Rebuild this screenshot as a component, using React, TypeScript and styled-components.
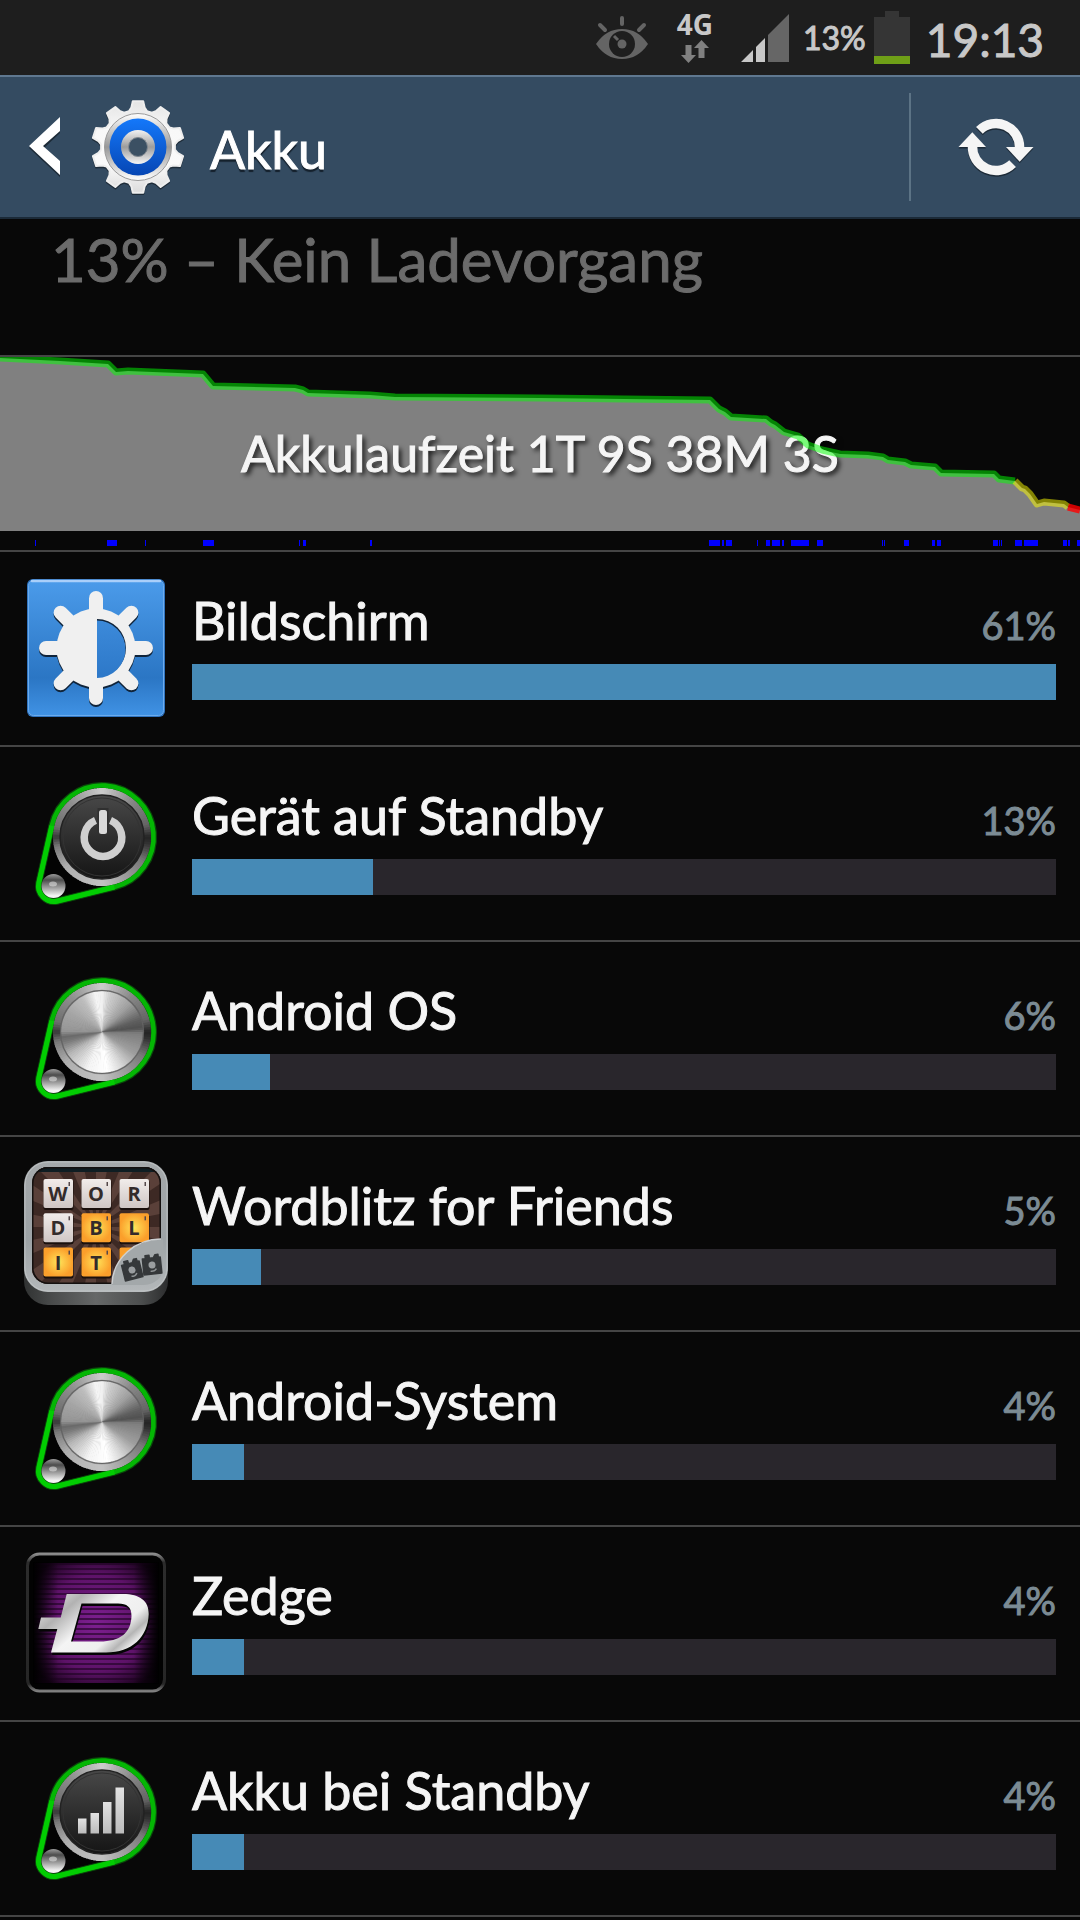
import React from "react";
import styled, { createGlobalStyle } from "styled-components";

const GlobalStyle = createGlobalStyle`
  *, *::before, *::after { box-sizing: border-box; }
  body {
    margin: 0;
    background: #080808;
    color: #f5f5f5;
    font-family: Lato, "Open Sans", sans-serif;
    -webkit-text-stroke: 1px currentColor;
    overflow-x: hidden;
  }
  svg { -webkit-text-stroke: 0; }
`;

/* ---------- layout ---------- */

const Screen = styled.div`
  display: flex;
  flex-direction: column;
  height: 100vh;
  overflow: hidden;
`;

const StatusBar = styled.div`
  display: flex;
  flex: none;
  align-items: center;
  justify-content: flex-end;
  height: 75px;
  padding-right: 36px;
  background: #1e1e1e;
  color: #c8c8c8;
`;

const StatusIcon = styled.svg<{ $gap: number }>`
  display: block;
  flex: none;
  margin-right: ${(p) => p.$gap}px;
`;

const Network = styled.div`
  display: flex;
  flex-direction: column;
  align-items: center;
  gap: 4px;
  width: 40px;
  margin-right: 26px;
  font: 700 28px/24px "Open Sans", sans-serif;
  -webkit-text-stroke: 0;
`;

const BatteryLevel = styled.span`
  margin-right: 8px;
  font-size: 32px;
  line-height: 40px;
`;

const Clock = styled.time`
  padding-top: 4px;
  font-size: 46px;
  line-height: 56px;
`;

const ActionBar = styled.header`
  display: flex;
  flex: none;
  align-items: center;
  height: 144px;
  border-top: 2px solid #5f7890;
  border-bottom: 2px solid #1b2a38;
  background: #344b61;
`;

const UpButton = styled.button`
  display: flex;
  align-items: center;
  gap: 28px;
  height: 100%;
  padding: 0 0 0 28px;
  border: 0;
  background: none;
`;

const Title = styled.h1`
  flex: 1;
  margin: 0 0 0 24px;
  padding-top: 4px;
  color: #fff;
  font-size: 52px;
  font-weight: 400;
  line-height: 64px;
  text-shadow: 0 3px 1px #14202c;
`;

const RefreshButton = styled.button`
  display: flex;
  align-items: center;
  justify-content: center;
  width: 171px;
  height: 108px;
  padding: 0;
  border: 0;
  border-left: 2px solid #5c7385;
  background: none;
`;

const Status = styled.p`
  flex: none;
  height: 136px;
  margin: 0;
  padding: 4px 51px;
  color: #6b6b6b;
  font-size: 60px;
  line-height: 72px;
`;

const History = styled.section`
  display: grid;
  flex: none;
  grid-template-columns: minmax(0, 1fr);
  border-top: 2px solid #454545;
  border-bottom: 2px solid #454545;
`;

const Layer = styled.svg`
  display: block;
  grid-area: 1 / 1;
  width: 100%;
  height: 193px;
`;

const Runtime = styled.p`
  grid-area: 1 / 1;
  justify-self: center;
  margin: 0;
  padding-top: 64px;
  font-size: 50px;
  line-height: 64px;
  white-space: nowrap;
  text-shadow: 3px 3px 5px rgba(0, 0, 0, 0.85);
`;

const AppList = styled.ul`
  margin: 0;
  padding: 0;
  list-style: none;
`;

const Row = styled.li`
  display: flex;
  gap: 24px;
  height: 195px;
  padding: 24px 24px 0;
  border-bottom: 2px solid #454545;
`;

const RowIcon = styled.svg`
  display: block;
  flex: none;
  width: 144px;
  height: 144px;
`;

const Usage = styled.div`
  flex: 1;
  min-width: 0;
  padding-top: 12px;
`;

const Line = styled.div`
  display: flex;
  align-items: baseline;
  justify-content: space-between;
  height: 64px;
  margin-bottom: 12px;
  line-height: 64px;
`;

const Name = styled.span`
  font-size: 52px;
`;

const Percent = styled.span`
  color: #7b8b94;
  font-size: 38px;
`;

const Track = styled.div`
  height: 36px;
  background: #29262c;
`;

const Fill = styled.div`
  height: 100%;
  background: #468ab6;
`;

/* ---------- icons ---------- */

const polar = (cx: number, cy: number, r: number, deg: number) => {
  const a = (deg * Math.PI) / 180;
  return `${(cx + r * Math.sin(a)).toFixed(2)} ${(cy - r * Math.cos(a)).toFixed(2)}`;
};

type Stop = [number, number];

const shade = (stops: Stop[], deg: number) => {
  for (let i = 1; i < stops.length; i++) {
    if (deg <= stops[i][0]) {
      const [a, va] = stops[i - 1];
      const [b, vb] = stops[i];
      return Math.round(va + ((vb - va) * (deg - a)) / (b - a));
    }
  }
  return stops[stops.length - 1][1];
};

const FACE: Stop[] = [
  [0, 240], [12, 205], [45, 160], [72, 95], [84, 80], [92, 125], [125, 160],
  [150, 215], [172, 255], [200, 245], [235, 185], [255, 120], [263, 105],
  [272, 150], [300, 165], [330, 190], [350, 245], [360, 240],
];
const RIM: Stop[] = [
  [0, 205], [40, 135], [75, 100], [90, 35], [98, 50], [120, 120], [180, 195],
  [230, 175], [258, 120], [270, 55], [282, 110], [320, 145], [360, 205],
];

const Brushed = ({ r, stops }: { r: number; stops: Stop[] }) => (
  <g>
    {Array.from({ length: 120 }, (_, i) => {
      const v = shade(stops, i * 3 + 1.5);
      return (
        <path
          key={i}
          d={`M78 65L${polar(78, 65, r, i * 3)}A${r} ${r} 0 0 1 ${polar(78, 65, r, i * 3 + 4)}Z`}
          fill={`rgb(${v},${v},${v})`}
        />
      );
    })}
  </g>
);

const Knob = ({ kind }: { kind: "metal" | "power" | "signal" }) => (
  <RowIcon viewBox="0 -1 144 144" aria-hidden="true">
    <defs>
      <linearGradient id={`disc-${kind}`} x1="0" y1="0" x2="0" y2="1">
        <stop offset="0" stopColor="#484848" />
        <stop offset="1" stopColor="#151515" />
      </linearGradient>
      <linearGradient id={`ball-${kind}`} x1="0" y1="0" x2="0" y2="1">
        <stop offset="0" stopColor="#9a9a9a" />
        <stop offset="0.25" stopColor="#4c4c4c" />
        <stop offset="0.5" stopColor="#8c8c8c" />
        <stop offset="0.9" stopColor="#f4f4f4" />
      </linearGradient>
      <linearGradient id={`glyph-${kind}`} x1="0" y1="0" x2="0" y2="1">
        <stop offset="0" stopColor="#e2e2e2" />
        <stop offset="1" stopColor="#bcbcbc" />
      </linearGradient>
    </defs>
    <path
      d="M14.9 110.6L27.8 53.7A51.5 51.5 0 1 1 90.4 115L33.7 129A15.5 15.5 0 0 1 14.9 110.6Z"
      fill="#030303"
      stroke="#0a4a0a"
      strokeWidth="7"
    />
    <Brushed r={49} stops={RIM} />
    {kind === "metal" ? (
      <>
        <circle cx="78" cy="65" r="42" fill="#777" />
        <Brushed r={41} stops={FACE} />
        <circle cx="78" cy="65" r="41.5" fill="none" stroke="#555" strokeOpacity="0.55" strokeWidth="1.5" />
      </>
    ) : (
      <>
        <circle cx="78" cy="65" r="42" fill={`url(#disc-${kind})`} stroke="#222" strokeWidth="1.5" />
        <circle cx="78" cy="65" r="39" fill="none" stroke="#333" strokeWidth="1" />
      </>
    )}
    <circle cx="29.5" cy="114" r="12" fill={`url(#ball-${kind})`} />
    <ellipse cx="29" cy="112" rx="4" ry="2.5" fill="#ddd" opacity="0.6" />
    <path
      d="M14.9 110.6L27.8 53.7A51.5 51.5 0 1 1 90.4 115L33.7 129A15.5 15.5 0 0 1 14.9 110.6Z"
      fill="none"
      stroke="#04b604"
      strokeWidth="4.6"
    />
    <path d="M27.8 53.7L14.9 110.6A15.5 15.5 0 0 0 33.7 129L90.4 115" fill="none" stroke="#02cd02" strokeWidth="5" />
    {kind === "power" && (
      <>
        <path d="M71.5 48.4A18.8 18.8 0 1 0 86.5 48.4" fill="none" stroke="#cfcfcf" strokeWidth="7.5" />
        <rect x="73.500" y="36" width="11" height="26" fill="#303030" />
        <rect x="75" y="38" width="8" height="24" rx="2.5" fill="#dadada" />
      </>
    )}
    {kind === "signal" && (
      <g fill={`url(#glyph-${kind})`}>
        <rect x="54" y="71.5" width="8.5" height="15" />
        <rect x="66.5" y="66" width="8.5" height="20.5" />
        <rect x="79" y="55" width="8.5" height="31.5" />
        <rect x="91.5" y="40.5" width="8.5" height="46" />
      </g>
    )}
  </RowIcon>
);

const SunShape = () => (
  <>
    {[0, 45, 90, 135, 180, 225, 270, 315].map((a) => (
      <path
        key={a}
        d={`M${polar(72, 72, 36, a)}L${polar(72, 72, 50, a)}`}
        stroke="currentColor"
        strokeWidth="14"
        strokeLinecap="round"
      />
    ))}
    <circle cx="72" cy="72" r="39.5" fill="currentColor" />
  </>
);

const DisplayIcon = () => (
  <RowIcon viewBox="0 0 144 144" aria-hidden="true">
    <defs>
      <linearGradient id="display-bg" x1="0" y1="0" x2="0" y2="1">
        <stop offset="0" stopColor="#4b9bea" />
        <stop offset="0.72" stopColor="#2b76c4" />
        <stop offset="1" stopColor="#4092e4" />
      </linearGradient>
      <linearGradient id="display-hole" x1="0" y1="0" x2="0" y2="1">
        <stop offset="0" stopColor="#3c8ada" />
        <stop offset="1" stopColor="#2d78c8" />
      </linearGradient>
    </defs>
    <rect x="3" y="3" width="138" height="138" rx="6" fill="#2f74c0" />
    <rect x="4.5" y="4.5" width="135" height="135" rx="5" fill="url(#display-bg)" stroke="#6cabec" />
    <path d="M8 5H136" stroke="#a9cffa" strokeWidth="2.5" strokeLinecap="round" />
    <g color="#10243a" transform="translate(0 2)">
      <SunShape />
    </g>
    <g color="#f0f0f0">
      <SunShape />
    </g>
    <path d="M73 43A29 29 0 0 1 73 101Z" fill="#10243a" />
    <path d="M73 44.5A28.500 28.750 0 0 1 73 102Z" fill="url(#display-hole)" />
  </RowIcon>
);

const TILES = [
  ["W", "O", "R"],
  ["D", "B", "L"],
  ["I", "T", ""],
];

const Camera = ({ at }: { at: string }) => (
  <g transform={at}>
    <path d="M-9-7H-6V-10H-2V-7H2L4-10H7V-7H9V9H-9Z" fill="#35383a" stroke="#35383a" strokeWidth="1.5" strokeLinejoin="round" />
    <circle cx="0" cy="0" r="3.5" fill="#9a9ea0" />
    <path d="M-2 6Q2 7 4 4" fill="none" stroke="#8d9193" strokeWidth="1.5" />
  </g>
);

const WordIcon = () => (
  <RowIcon viewBox="0 0 144 144" aria-hidden="true">
    <defs>
      <linearGradient id="word-side" x1="0" x2="1">
        <stop offset="0" stopColor="#303232" />
        <stop offset="0.2" stopColor="#4a4c4c" />
        <stop offset="0.5" stopColor="#666868" />
        <stop offset="0.8" stopColor="#4e5050" />
        <stop offset="1" stopColor="#2c2d2e" />
      </linearGradient>
      <linearGradient id="word-frame" x1="0" y1="0" x2="0" y2="1">
        <stop offset="0" stopColor="#a5a9ab" />
        <stop offset="0.6" stopColor="#9da3a6" />
        <stop offset="1" stopColor="#b4b8ba" />
      </linearGradient>
      <linearGradient id="word-light" x1="0" y1="0" x2="0" y2="1">
        <stop offset="0" stopColor="#f1ecea" />
        <stop offset="1" stopColor="#cfc6c4" />
      </linearGradient>
      <radialGradient id="word-gold">
        <stop offset="0" stopColor="#ffe45a" />
        <stop offset="1" stopColor="#fb9f2b" />
      </radialGradient>
      <clipPath id="word-clip">
        <rect x="8" y="6" width="129" height="117" rx="16" />
      </clipPath>
    </defs>
    <rect y="40" width="144" height="104" rx="24" fill="url(#word-side)" />
    <rect y="0" width="144" height="131" rx="24" fill="url(#word-frame)" />
    <rect x="1" y="1" width="142" height="129" rx="23" fill="none" stroke="#c6cacc" strokeOpacity="0.7" />
    <g clipPath="url(#word-clip)">
      <rect x="8" y="6" width="129" height="117" fill="#3d2924" />
      {Array.from({ length: 16 }, (_, i) => (
        <path
          key={i}
          d={`M72 66L${polar(72, 66, 110, i * 22.5)}L${polar(72, 66, 110, i * 22.5 + 11)}Z`}
          fill="#5a4039"
        />
      ))}
      <rect x="8" y="4" width="129" height="7" fill="#0f1d22" />
      <rect x="8" y="6" width="129" height="117" rx="16" fill="none" stroke="#14100f" strokeWidth="3" />
      {TILES.map((line, r) =>
        line.map((ch, c) => {
          const x = 19.5 + c * 38;
          const y = 18 + r * 34.3;
          const gold = r === 2 || (r === 1 && c > 0);
          return (
            <g key={`${r}${c}`}>
              <rect x={x} y={y + 1} width="30" height="30" rx="2" fill="#1a100d" />
              <rect x={x} y={y} width="29.5" height="29" rx="2" fill={gold ? "url(#word-gold)" : "url(#word-light)"} />
              <text x={x + 14.5} y={y + 22} textAnchor="middle" fontFamily="Open Sans" fontWeight="700" fontSize="20" fill="#332b2b">
                {ch}
              </text>
              <rect x={x + 25} y={y + 3} width="1.5" height="4" fill="#54484a" />
            </g>
          );
        }),
      )}
    </g>
    <path d="M139 78C112 78 89 97 88 124H120Q139 122 139 105Z" fill="#a3a8aa" />
    <path d="M137 78C112 78 89 97 88 123" fill="none" stroke="#cdd0d2" strokeWidth="1.5" />
    <Camera at="translate(108 109) rotate(-14)" />
    <Camera at="translate(128 104) rotate(-6)" />
  </RowIcon>
);

const ZedgeIcon = () => (
  <RowIcon viewBox="0 0 144 144" aria-hidden="true">
    <defs>
      <radialGradient id="zedge-glow" r="0.62">
        <stop offset="0" stopColor="#7d1f90" />
        <stop offset="0.65" stopColor="#5d1268" />
        <stop offset="1" stopColor="#160218" />
      </radialGradient>
      <linearGradient id="zedge-fade" x1="0" x2="1">
        <stop offset="0" stopColor="#000" />
        <stop offset="0.2" stopColor="#000" stopOpacity="0" />
        <stop offset="0.8" stopColor="#000" stopOpacity="0" />
        <stop offset="1" stopColor="#000" />
      </linearGradient>
      <linearGradient id="zedge-frame" x1="0" y1="0" x2="0" y2="1">
        <stop offset="0" stopColor="#8c8c8c" />
        <stop offset="0.06" stopColor="#2c2c2c" />
        <stop offset="0.95" stopColor="#262626" />
        <stop offset="1" stopColor="#808080" />
      </linearGradient>
      <linearGradient id="zedge-metal" x1="0" y1="0" x2="1" y2="0.6">
        <stop offset="0" stopColor="#f4f4f4" />
        <stop offset="0.3" stopColor="#b2b2b2" />
        <stop offset="0.55" stopColor="#f4f4f4" />
        <stop offset="0.8" stopColor="#efefef" />
        <stop offset="0.92" stopColor="#b5b5b5" />
        <stop offset="1" stopColor="#e6e6e6" />
      </linearGradient>
    </defs>
    <rect x="3.5" y="3" width="137" height="137" rx="12" fill="#020202" stroke="url(#zedge-frame)" strokeWidth="3" />
    <rect x="10" y="12" width="124" height="120" fill="url(#zedge-glow)" />
    {Array.from({ length: 24 }, (_, i) => (
      <rect key={i} x="10" y={12 + i * 5} width="124" height="2" fill="#1c0320" opacity="0.6" />
    ))}
    <rect x="9" y="11" width="126" height="122" fill="url(#zedge-fade)" />
    {["#050505", "url(#zedge-metal)"].map((fill, i) => (
      <path
        key={fill}
        transform={i ? undefined : "translate(1 2.5)"}
        fillRule="evenodd"
        fill={fill}
        d="M42.7 43H99C116 43 125 50 124.7 63C124 86 108 101.5 82 101.5H27L33.3 78H14.3L17 66.5H36.7ZM57.5 52.5L47 90.5H76C96 90.5 107 82 107.5 65C107.5 56 103 52.5 94 52.5Z"
      />
    ))}
  </RowIcon>
);

const gearPath = Array.from({ length: 10 }, (_, i) => {
  const a = i * 36;
  return [
    polar(48, 48, 37, a - 14),
    polar(48, 48, 40, a - 9.5),
    polar(48, 48, 46, a - 6.5),
    polar(48, 48, 46, a + 6.5),
    polar(48, 48, 40, a + 9.5),
    polar(48, 48, 37, a + 14),
  ].join("L");
}).join("L");

const SettingsIcon = () => (
  <svg width="96" height="96" viewBox="0 0 96 96" aria-hidden="true">
    <defs>
      <linearGradient id="gear-body" x1="0" y1="0" x2="0" y2="1">
        <stop offset="0" stopColor="#e4e4e4" />
        <stop offset="0.3" stopColor="#f8f8f8" />
        <stop offset="0.7" stopColor="#fafafa" />
        <stop offset="1" stopColor="#dcdcdc" />
      </linearGradient>
      <linearGradient id="gear-rim" x1="0" y1="0" x2="0" y2="1">
        <stop offset="0" stopColor="#fff" />
        <stop offset="0.5" stopColor="#989898" />
        <stop offset="1" stopColor="#fff" />
      </linearGradient>
      <linearGradient id="gear-blue" x1="0" y1="0" x2="0" y2="1">
        <stop offset="0" stopColor="#1478fa" />
        <stop offset="1" stopColor="#0646b4" />
      </linearGradient>
      <linearGradient id="gear-hub" x1="0" y1="0" x2="0" y2="1">
        <stop offset="0" stopColor="#f2f2f2" />
        <stop offset="0.5" stopColor="#9c9c9c" />
        <stop offset="1" stopColor="#f6f6f6" />
      </linearGradient>
    </defs>
    <path d={`M${gearPath}Z`} transform="translate(0 1.5)" fill="#1f2d3a" stroke="#1f2d3a" strokeWidth="2" strokeLinejoin="round" />
    <path d={`M${gearPath}Z`} fill="url(#gear-body)" stroke="#eee" strokeWidth="2" strokeLinejoin="round" />
    <circle cx="48" cy="48" r="33.5" fill="url(#gear-rim)" stroke="#9a9a9a" />
    <circle cx="48" cy="48" r="28.5" fill="url(#gear-blue)" />
    <circle cx="48" cy="48" r="17" fill="url(#gear-hub)" />
    <circle cx="48" cy="48" r="9.5" fill="#3b5063" stroke="#808890" />
  </svg>
);

const RefreshShape = () => (
  <>
    {[0, 180].map((a) => (
      <g key={a} transform={`rotate(${a} 38 32)`}>
        <path d="M21.4 15.4A23.5 23.5 0 0 1 61.5 33" fill="none" stroke="currentColor" strokeWidth="9.5" />
        <path d="M48 32H75.5L61.7 46.7Z" fill="currentColor" />
      </g>
    ))}
  </>
);

/* ---------- battery history ---------- */

const GREEN =
  "0,1 60,4 108,7 116,15 128,14 203,17 213,29 295,31 303,33 308,36 370,38 395,40 540,41 710,43 719,52 725,55 731,60 766,62 771,66 775,68 784,75 791,77 798,79 808,88 822,93 840,97 868,98 883,100 888,103 905,105 911,108 935,110 941,116 994,117 999,122 1015,124";
const YELLOW = "1015,124 1022,131 1025,132 1030,137 1037,147 1044,145 1064,147 1068,150";
const RED = "1068,150 1080,153";

const ACTIVE: [number, number][] = [
  [35, 1], [107, 10], [145, 1], [203, 11], [299, 1], [303, 3], [370, 2], [709, 11],
  [722, 2], [726, 6], [757, 1], [766, 4], [772, 8], [782, 2], [791, 18], [817, 6],
  [882, 1], [884, 1], [904, 5], [932, 3], [937, 4], [993, 5], [999, 1], [1001, 1],
  [1015, 7], [1024, 14], [1063, 4], [1068, 2], [1077, 3],
];

const APPS = [
  { name: "Bildschirm", share: 61, level: 100, icon: <DisplayIcon /> },
  { name: "Gerät auf Standby", share: 13, level: 21, icon: <Knob kind="power" /> },
  { name: "Android OS", share: 6, level: 9, icon: <Knob kind="metal" /> },
  { name: "Wordblitz for Friends", share: 5, level: 8, icon: <WordIcon /> },
  { name: "Android-System", share: 4, level: 6, icon: <Knob kind="metal" /> },
  { name: "Zedge", share: 4, level: 6, icon: <ZedgeIcon /> },
  { name: "Akku bei Standby", share: 4, level: 6, icon: <Knob kind="signal" /> },
];

export default function App() {
  return (
    <Screen>
      <GlobalStyle />
      <StatusBar>
        <StatusIcon $gap={26} width="54" height="46" viewBox="0 0 54 46" aria-hidden="true">
          <g fill="none" stroke="#646464" strokeLinecap="round" strokeWidth="4">
            <path d="M27 3V9M5 10L10 15M49 10L44 15" />
          </g>
          <path d="M1 29Q11 14 27 14T53 29Q43 44 27 44T1 29Z" fill="#646464" />
          <circle cx="27" cy="29" r="13" fill="#1e1e1e" />
          <circle cx="27" cy="29" r="4.5" fill="#646464" />
          <path d="M19 21L23 25" stroke="#646464" strokeWidth="3" />
        </StatusIcon>
        <Network>
          4G
          <svg width="28" height="24" viewBox="0 0 28 24" aria-hidden="true">
            <path d="M4.5 5H10.5V15H15L7.5 23L0 15H4.5ZM17.5 18V8H13L20.5 0L28 8H23.5V18Z" fill="#808080" />
          </svg>
        </Network>
        <StatusIcon $gap={14} width="48" height="48" viewBox="0 0 48 48" aria-hidden="true">
          <path d="M0 48L12 36V48ZM15 48V33L24 24V48Z" fill="#c8c8c8" />
          <path d="M27 48V21L48 0V48Z" fill="#666" />
        </StatusIcon>
        <BatteryLevel>13%</BatteryLevel>
        <StatusIcon $gap={16} width="36" height="54" viewBox="0 0 36 54" aria-hidden="true">
          <path d="M11 0H25V6H36V46H0V6H11Z" fill="#353535" />
          <path d="M0 45H36V53H0Z" fill="#6f9f17" />
        </StatusIcon>
        <Clock>19:13</Clock>
      </StatusBar>

      <ActionBar>
        <UpButton type="button" aria-label="Zurück">
          <svg width="34" height="64" viewBox="0 0 34 64" aria-hidden="true">
            <path d="M32 4V18L16 33L32 47V62L1 33Z" fill="#1d2b38" />
            <path d="M32 2V16L15 31L32 46V60L1 31Z" fill="#fff" />
          </svg>
          <SettingsIcon />
        </UpButton>
        <Title>Akku</Title>
        <RefreshButton type="button" aria-label="Aktualisieren">
          <svg width="76" height="64" viewBox="0 0 76 64" aria-hidden="true">
            <g color="#1d2b38" transform="translate(0 1.5)">
              <RefreshShape />
            </g>
            <g color="#f5f5f5">
              <RefreshShape />
            </g>
          </svg>
        </RefreshButton>
      </ActionBar>

      <Status>13% – Kein Ladevorgang</Status>

      <History>
        <Layer viewBox="0 0 1080 193" preserveAspectRatio="none" aria-hidden="true">
          <polygon points={`${GREEN} ${YELLOW} ${RED} 1080,174 0,174`} fill="#808080" />
          {ACTIVE.map(([x, w]) => (
            <rect key={x} x={x} y="183" width={w} height="6" fill="#00f" />
          ))}
        </Layer>
        <Runtime>Akkulaufzeit 1T 9S 38M 3S</Runtime>
        <Layer viewBox="0 0 1080 193" preserveAspectRatio="none" aria-hidden="true">
          <g fill="none" strokeWidth="7" strokeLinejoin="round">
            <polyline points={GREEN} stroke="#0f0" strokeOpacity="0.5" />
            <polyline points={YELLOW} stroke="#ff0" strokeOpacity="0.5" />
            <polyline points={RED} stroke="#f00" strokeOpacity="0.8" />
          </g>
        </Layer>
      </History>

      <AppList>
        {APPS.map((app) => (
          <Row key={app.name}>
            {app.icon}
            <Usage>
              <Line>
                <Name>{app.name}</Name>
                <Percent>{app.share}%</Percent>
              </Line>
              <Track role="progressbar" aria-label={app.name} aria-valuenow={app.level}>
                <Fill style={{ width: `${app.level}%` }} />
              </Track>
            </Usage>
          </Row>
        ))}
      </AppList>
    </Screen>
  );
}
